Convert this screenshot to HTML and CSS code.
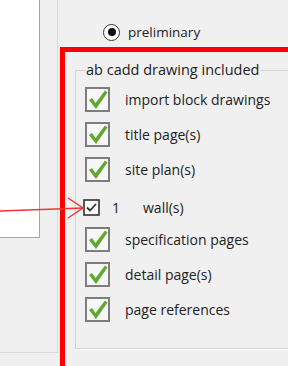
FILE: index.html
```html
<!DOCTYPE html>
<html lang="en">
<head>
  <meta charset="UTF-8" />
  <meta name="viewport" content="width=device-width, initial-scale=1.0" />
  <title>ab cadd drawing included</title>
  <link rel="stylesheet" href="styles.css">
</head>
<body>
  <div class="side">
    <div class="list"></div>
  </div>

  <div class="main">
    <div class="radio-row">
      <span class="radio"><span class="dot"></span></span>
      <span>preliminary</span>
    </div>

    <div class="frame">
      <fieldset class="group">
        <legend>ab cadd drawing included</legend>

        <div class="row">
          <svg class="check" width="25" height="25" viewBox="0 0 25 25"><rect x="1" y="1" width="23" height="23" fill="#f7f7f7" stroke="#7d7d7d" stroke-width="2"/><polygon points="4,13 7,11 10.5,16 20,3.5 22.5,5.5 11,22" fill="#62a82e"/></svg>
          <span>import block drawings</span>
        </div>
        <div class="row">
          <svg class="check" width="25" height="25" viewBox="0 0 25 25"><rect x="1" y="1" width="23" height="23" fill="#f7f7f7" stroke="#7d7d7d" stroke-width="2"/><polygon points="4,13 7,11 10.5,16 20,3.5 22.5,5.5 11,22" fill="#62a82e"/></svg>
          <span>title page(s)</span>
        </div>
        <div class="row">
          <svg class="check" width="25" height="25" viewBox="0 0 25 25"><rect x="1" y="1" width="23" height="23" fill="#f7f7f7" stroke="#7d7d7d" stroke-width="2"/><polygon points="4,13 7,11 10.5,16 20,3.5 22.5,5.5 11,22" fill="#62a82e"/></svg>
          <span>site plan(s)</span>
        </div>
        <div class="row row-wall">
          <svg class="small-check" width="17" height="17" viewBox="0 0 17 17"><rect x="1" y="1" width="15" height="15" fill="#fafafa" stroke="#333" stroke-width="1.6"/><polyline points="4,8.5 7,11.5 13,5" fill="none" stroke="#333" stroke-width="1.8"/></svg>
          <span class="count">1</span>
          <span>wall(s)</span>
        </div>
        <div class="row">
          <svg class="check" width="25" height="25" viewBox="0 0 25 25"><rect x="1" y="1" width="23" height="23" fill="#f7f7f7" stroke="#7d7d7d" stroke-width="2"/><polygon points="4,13 7,11 10.5,16 20,3.5 22.5,5.5 11,22" fill="#62a82e"/></svg>
          <span>specification pages</span>
        </div>
        <div class="row">
          <svg class="check" width="25" height="25" viewBox="0 0 25 25"><rect x="1" y="1" width="23" height="23" fill="#f7f7f7" stroke="#7d7d7d" stroke-width="2"/><polygon points="4,13 7,11 10.5,16 20,3.5 22.5,5.5 11,22" fill="#62a82e"/></svg>
          <span>detail page(s)</span>
        </div>
        <div class="row">
          <svg class="check" width="25" height="25" viewBox="0 0 25 25"><rect x="1" y="1" width="23" height="23" fill="#f7f7f7" stroke="#7d7d7d" stroke-width="2"/><polygon points="4,13 7,11 10.5,16 20,3.5 22.5,5.5 11,22" fill="#62a82e"/></svg>
          <span>page references</span>
        </div>
      </fieldset>
    </div>
  </div>

  <!-- annotation arrow pointing at the wall checkbox -->
  <svg class="arrow" width="90" height="30" viewBox="0 0 90 30">
    <line x1="0" y1="17" x2="83" y2="14" stroke="#f03434" stroke-width="1.4"/>
    <polyline points="68,4 83,14 68,24" fill="none" stroke="#f03434" stroke-width="1.4"/>
  </svg>
</body>
</html>
```

FILE: styles.css
```css
body {
  margin: 0;
  width: 288px;
  height: 366px;
  overflow: hidden;
  position: relative;
  display: flex;
  align-items: flex-start;
  background-color: #f0f0f0;
  color: #222;
  font-family: "Open Sans", "Liberation Sans", sans-serif;
  font-size: 14px;
}

.side {
  width: 58px;
  height: 353px;
  flex-shrink: 0;
  box-sizing: border-box;
  border-right: 1px solid #dadada;
  border-bottom: 1px solid #dadada;
}

.list {
  width: 40px;
  height: 238px;
  box-sizing: border-box;
  background-color: #fff;
  border-right: 1px solid #a5a5a5;
  border-bottom: 1px solid #a5a5a5;
}

.main {
  flex: 1;
  padding-left: 2px;
}

.radio-row {
  display: flex;
  align-items: center;
  gap: 8px;
  height: 30px;
  padding: 17px 0 0 43px;
  font-size: 13.5px;
}

.radio {
  width: 15px;
  height: 15px;
  border: 1px solid #333;
  border-radius: 50%;
  background-color: #fff;
  display: flex;
  align-items: center;
  justify-content: center;
}

.dot {
  width: 8px;
  height: 8px;
  border-radius: 50%;
  background-color: #111;
}

/* red highlight continues past the right and bottom edge */
.frame {
  height: 319px;
  box-sizing: border-box;
  border: 5px solid #ff0000;
  border-right: none;
  border-bottom: none;
  padding: 10px 0 0 10px;
}

.group {
  margin: 0;
  height: 287px;
  box-sizing: border-box;
  padding: 4px 0 0 9px;
  border: 1px solid #d5d5d5;
  border-right: none;
  box-shadow: 0 1px 0 #fff;
}

legend {
  padding: 0 1px;
  margin-left: 0;
  line-height: 16px;
  font-size: 14.5px;
}

.row {
  display: flex;
  align-items: center;
  gap: 15px;
  height: 35px;
}

.row-wall {
  gap: 12px;
  margin-top: 3px;
  margin-bottom: -3px;
}

.small-check {
  margin-left: -2px;
}

.count {
  margin-right: 11px;
}

.arrow {
  position: absolute;
  left: 0;
  top: 194px;
}
```
